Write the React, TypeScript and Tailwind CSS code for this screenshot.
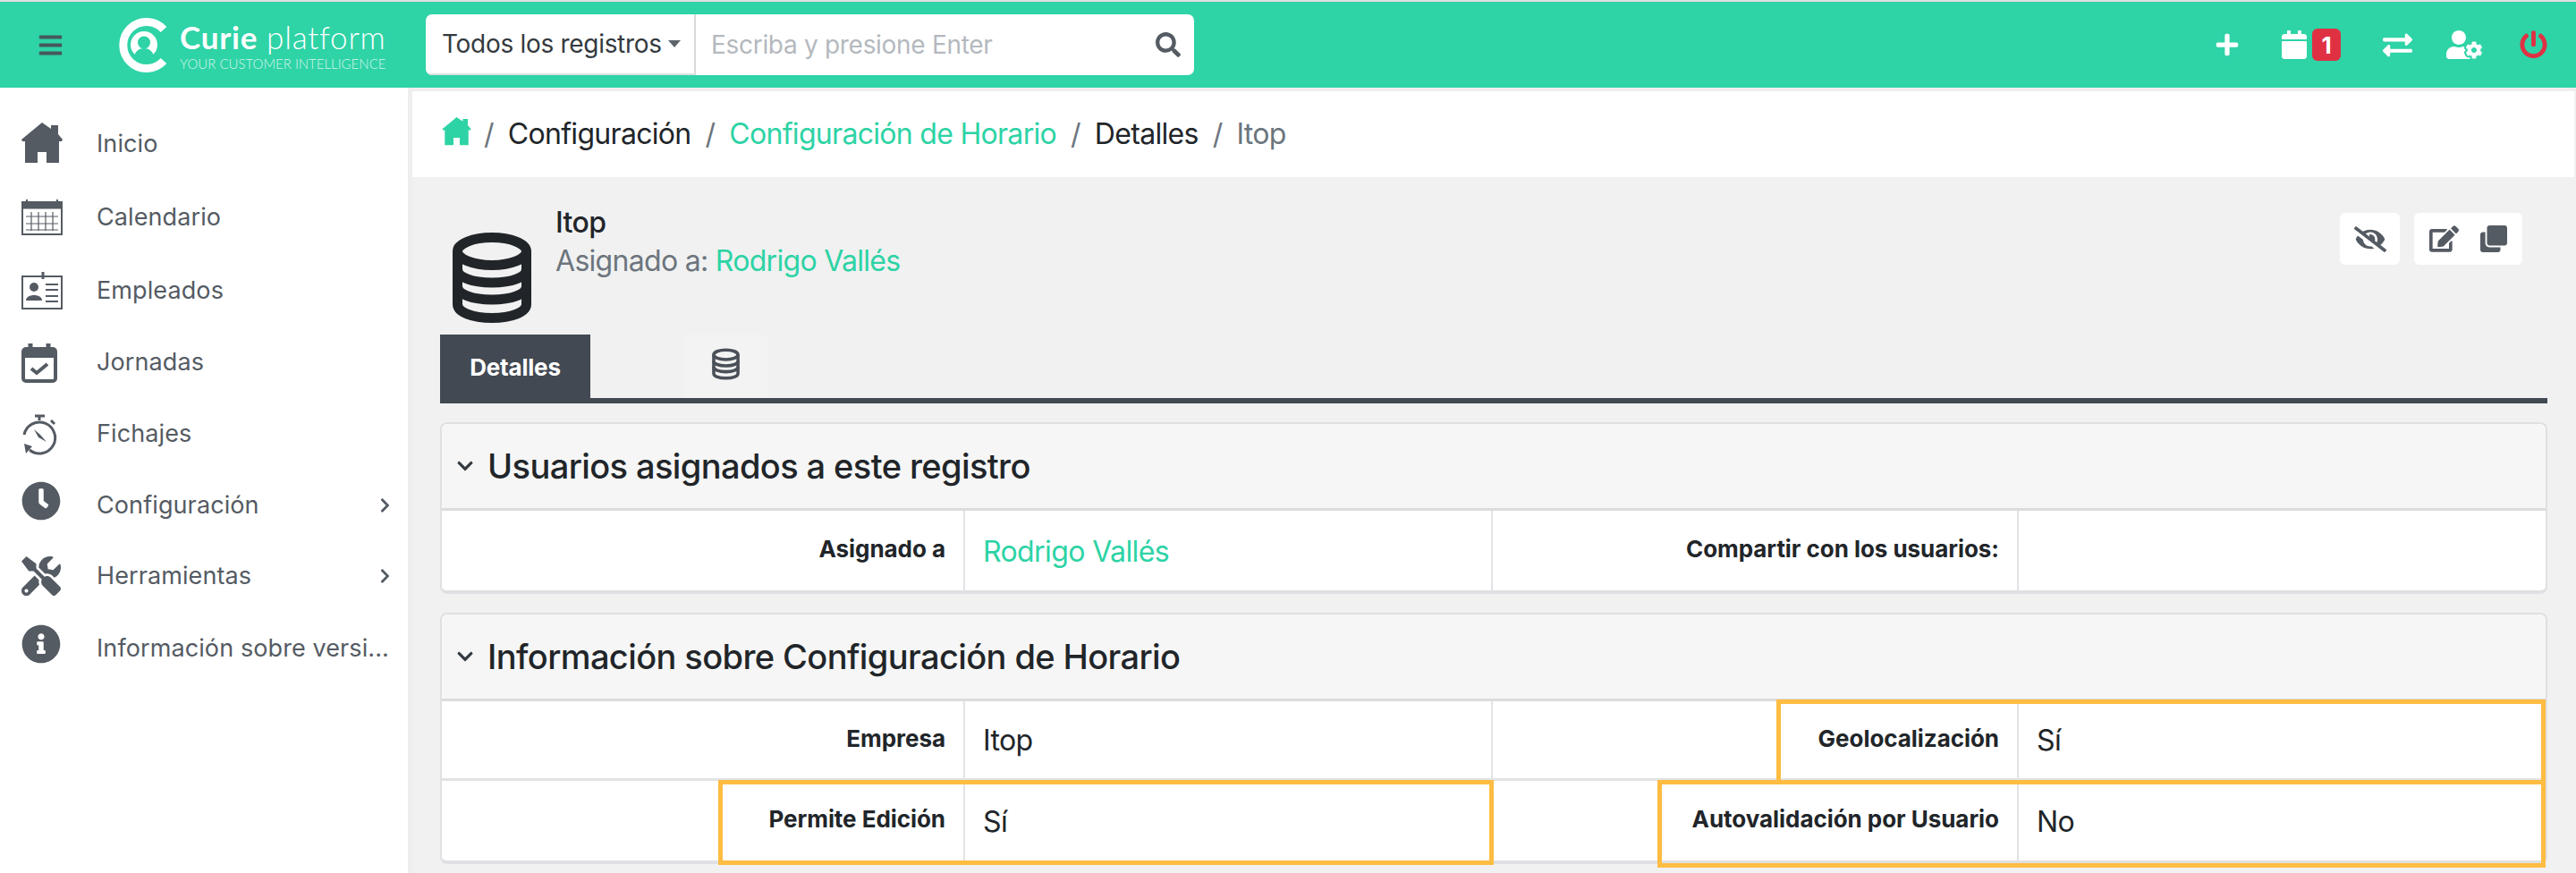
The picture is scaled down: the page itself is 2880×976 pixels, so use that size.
import React from "react";
import { FaBars, FaSearch, FaPlus, FaCalendar, FaExchangeAlt, FaUserCog, FaPowerOff, FaEyeSlash, FaEdit, FaClone, FaChevronRight, FaChevronDown, FaClock, FaTools, FaInfoCircle } from "react-icons/fa";

function Logo() {
  return (
    <svg viewBox="0 0 56 61" className="w-[56px] h-[61px] shrink-0" fill="none">
      <path d="M52 13 A26 26 0 1 0 52 48" stroke="#fff" strokeWidth="9" />
      <circle cx="30" cy="30" r="15" fill="#fff" />
      <circle cx="30" cy="27.5" r="7" fill="#2ed3a6" />
      <path d="M18 46 C20 37 24 34 30 34 C36 34 40 37 42 46 Z" fill="#2ed3a6" />
    </svg>
  );
}

function Db({ className, sw = 11 }: { className: string; sw?: number }) {
  return (
    <svg viewBox="0 0 88 101" className={className} fill="none" stroke="currentColor" strokeWidth={sw}>
      <ellipse cx="44" cy="21" rx="38.5" ry="15.5" />
      <path d="M5.5 21 V80 C5.5 89 22 95.5 44 95.5 C66 95.5 82.5 89 82.5 80 V21" />
      <path d="M5.5 41 C5.5 50 22 56 44 56 C66 56 82.5 50 82.5 41" />
      <path d="M5.5 60 C5.5 69 22 75 44 75 C66 75 82.5 69 82.5 60" />
    </svg>
  );
}

function House({ className }: { className: string }) {
  return (
    <svg viewBox="0 0 46 46" className={className} fill="currentColor">
      <path d="M23 0 L33 7 V3 H41 V13 L46 19 L45 21 H42 V45 H28 V33 H18 V45 H4 V21 H1 L0 19 Z" />
    </svg>
  );
}

function CalGrid() {
  return (
    <svg viewBox="0 0 46 40" className="w-[46px] h-[40px]" fill="none" stroke="#555b63">
      <rect x="1" y="3" width="44" height="36" strokeWidth="2" />
      <rect x="1" y="3" width="44" height="7" fill="#555b63" />
      <path d="M6 0 V4 M40 0 V4" strokeWidth="2" />
      <path d="M5 19 H41 M5 27 H41 M5 34 H41 M11 14 V35 M19 14 V35 M27 14 V35 M35 14 V35" strokeWidth="1.2" />
    </svg>
  );
}

function IdCard() {
  return (
    <svg viewBox="0 0 46 42" className="w-[46px] h-[42px]" fill="none" stroke="#555b63">
      <rect x="1" y="5" width="44" height="36" strokeWidth="2" />
      <path d="M24 0 V8" strokeWidth="3" />
      <circle cx="14" cy="17" r="5" fill="#555b63" stroke="none" />
      <path d="M5 32 C5 24 23 24 23 32 Z" fill="#555b63" stroke="none" />
      <path d="M27 14 H41 M27 20 H41 M27 27 H41 M27 33 H41" strokeWidth="2" />
    </svg>
  );
}

function CalCheck() {
  return (
    <svg viewBox="0 0 40 44" className="w-[40px] h-[44px]" fill="none" stroke="#555b63">
      <path d="M10 0 V8 M30 0 V8" strokeWidth="5" />
      <rect x="2" y="6" width="36" height="36" rx="3" strokeWidth="4" />
      <path d="M2 12 H38" strokeWidth="8" />
      <path d="M11 28 L17 33 L29 23" strokeWidth="4" />
    </svg>
  );
}

function Watch() {
  return (
    <svg viewBox="0 0 41 46" className="w-[41px] h-[46px]" fill="none" stroke="#555b63">
      <path d="M15 2 H26 M20 2 V7" strokeWidth="3" />
      <path d="M33 7 L37 11" strokeWidth="3" />
      <path d="M3 21 A17.5 17.5 0 1 1 9 38" strokeWidth="3" transform="translate(0 2)" />
      <path d="M3 33 L12 36 L5 44 Z" fill="#555b63" stroke="none" />
      <path d="M14 17 L21 23 L28 31 L19 26 Z" fill="#555b63" stroke="none" />
    </svg>
  );
}

const menu = [
  { t: "Inicio", h: "h-[82px]", i: <House className="w-[46px] h-[46px]" />, chev: false, n: "-mt-[2px]" },
  { t: "Calendario", h: "h-[82px]", i: <CalGrid />, chev: false, n: "" },
  { t: "Empleados", h: "h-[82px]", i: <IdCard />, chev: false, n: "" },
  { t: "Jornadas", h: "h-[79px]", i: <CalCheck />, chev: false, n: "" },
  { t: "Fichajes", h: "h-[81px]", i: <Watch />, chev: false, n: "" },
  { t: "Configuración", h: "h-[78px]", i: <FaClock className="w-[44px] h-[44px]" />, chev: true, n: "-mt-[10px]" },
  { t: "Herramientas", h: "h-[80px]", i: <FaTools className="w-[44px] h-[44px]" />, chev: true, n: "" },
  { t: "Información sobre versi...", h: "h-[82px]", i: <FaInfoCircle className="w-[44px] h-[44px]" />, chev: false, n: "-mt-[10px]" },
];

function Cell({ label, value, teal }: { label?: string; value?: boolean; teal?: boolean }) {
  if (value) {
    return (
      <div className={`flex items-center pl-[20px] pt-[2px] text-[32px] tracking-[-0.6px] border-r-2 border-[#e2e3e5] last:border-r-0 ${teal ? "text-[#2dd3a5]" : "text-[#212529]"}`}>
        {label}
      </div>
    );
  }
  return (
    <div className="flex items-center justify-end pr-[20px] pb-[4px] text-[26px] font-bold tracking-[-0.05px] text-[#212529] border-r-2 border-[#e2e3e5]">
      {label}
    </div>
  );
}

function Card({ title, rows, children, className }: { title: string; rows: { l1: string; v1: string; l2: string; v2: string; teal?: boolean }[]; children?: React.ReactNode; className?: string }) {
  return (
    <section className={`relative bg-white border-2 border-[#e0e0e0] border-b-[4px] border-b-[#dfe0e3] rounded-[8px] ${className ?? ""}`}>
      <div className="h-[97px] bg-[#f6f6f6] rounded-t-[8px] border-b-[3px] border-[#dcdcdc] flex items-center pl-[16px] gap-[15px]">
        <FaChevronDown className="w-[20px] h-[20px] text-[#343a40]" />
        <h2 className="text-[38px] font-medium tracking-[-0.6px] text-[#212529] leading-none">{title}</h2>
      </div>
      {rows.map((r, i) => (
        <div key={i} className={`grid grid-cols-[585px_590px_588px_1fr] h-[89px] ${i < rows.length - 1 ? "border-b-[3px] border-[#e2e3e5]" : ""}`}>
          <Cell label={r.l1} />
          <Cell label={r.v1} value teal={r.teal} />
          <Cell label={r.l2} />
          <Cell label={r.v2} value />
        </div>
      ))}
      {children}
    </section>
  );
}

export default function App() {
  return (
    <div className="w-[2880px] h-[976px] overflow-hidden bg-[#eeeeee] flex flex-col font-['Inter','Liberation_Sans',sans-serif]">
      <div className="h-[2px] shrink-0 bg-[#e0e0e0]" />
      <header className="h-[96px] shrink-0 bg-[#2ed3a6] flex items-center pl-[42px] pr-[32px]">
        <FaBars className="w-[29px] h-[29px] text-[#46585a] shrink-0" />
        <div className="ml-[60px] flex items-center w-[345px] shrink-0">
          <Logo />
          <div className="ml-[14px] text-white font-['Lato',sans-serif] leading-none">
            <div className="text-[35px] tracking-[0.8px] whitespace-nowrap leading-[38px]"><span className="font-bold">Curie</span> <span className="font-light">platform</span></div>
            <div className="text-[15px] font-light text-[#d3f5ea] whitespace-nowrap mt-[4px]">YOUR CUSTOMER INTELLIGENCE</div>
          </div>
        </div>
        <div className="flex w-[859px] h-[68px] bg-white rounded-[7px] overflow-hidden shrink-0">
          <div className="w-[302px] flex items-center pl-[18px] border-r-2 border-r-[#d9dadc] border-b-2 border-b-[#dfe1e4] text-[28px] tracking-[-0.3px] text-[#343a40] whitespace-nowrap gap-[7px] shrink-0">
            Todos los registros
            <span className="w-0 h-0 border-x-[7px] border-x-transparent border-t-[8px] border-t-[#5d646b]" />
          </div>
          <div className="flex-1 flex items-center pl-[17px] pr-[15px] text-[28px] tracking-[-0.3px] text-[#b4b9be]">
            <span className="flex-1">Escriba y presione Enter</span>
            <FaSearch className="w-[28px] h-[28px] text-[#555b63]" />
          </div>
        </div>
        <div className="ml-auto flex items-center text-white">
          <FaPlus className="w-[28px] h-[28px]" />
          <FaCalendar className="ml-[47px] w-[28px] h-[32px]" />
          <span className="ml-[6px] w-[32px] h-[36px] rounded-[6px] bg-[#e03143] flex items-center justify-center text-[26px] font-bold">1</span>
          <FaExchangeAlt className="ml-[47px] w-[33px] h-[33px]" />
          <FaUserCog className="ml-[38px] w-[40px] h-[32px]" />
          <FaPowerOff className="ml-[42px] w-[31px] h-[32px] text-[#e03143]" />
        </div>
      </header>
      <div className="flex flex-1 min-h-0">
        <aside className="w-[456px] shrink-0 bg-white pt-[22px] text-[#555b63]">
          {menu.map((m) => (
            <div key={m.t} className={`${m.h} flex items-center text-[27px] tracking-[0.1px]`}>
              <div className={`w-[108px] pl-[24px] shrink-0 flex ${m.n}`}>{m.i}</div>
              <span className="w-[340px] whitespace-nowrap">{m.t}</span>
              {m.chev && <FaChevronRight className="-ml-[24px] w-[13px] h-[18px] shrink-0" />}
            </div>
          ))}
        </aside>
        <main className="ml-[5px] flex-1 min-w-0 bg-[#f1f1f1] mt-[4px] pr-[2px]">
          <nav className="h-[96px] bg-white pl-[33px] flex items-center text-[32px] tracking-[-0.7px] text-[#6c757d] whitespace-nowrap">
            <House className="w-[33px] h-[32px] text-[#2dd3a5] -mt-[6px]" />
            <span className="ml-[14px] mr-[16px]">/</span>
            <span className="text-[#212529]">Configuración</span>
            <span className="mx-[16px]">/</span>
            <span className="text-[#2dd3a5]">Configuración de Horario</span>
            <span className="mx-[16px]">/</span>
            <span className="text-[#212529]">Detalles</span>
            <span className="mx-[16px]">/</span>
            <span>Itop</span>
          </nav>
          <div className="pl-[31px] pr-[30px]">
            <div className="h-[176px] flex relative">
              <Db className="ml-[14px] mt-[62px] w-[88px] h-[101px] text-[#212529] shrink-0" />
              <div className="ml-[27px] pt-[31px]">
                <div className="text-[32px] font-medium tracking-[-0.6px] text-[#212529] leading-[40px]">Itop</div>
                <div className="text-[32px] tracking-[-0.7px] text-[#6c757d] leading-[44px] mt-[1px]">Asignado a: <span className="text-[#2dd3a5]">Rodrigo Vallés</span></div>
              </div>
              <div className="ml-auto mt-[40px] mr-[28px] flex gap-[16px] h-[58px] text-[#555b63]">
                <div className="w-[67px] bg-white rounded-[6px] flex items-center justify-center"><FaEyeSlash className="w-[36px] h-[29px]" /></div>
                <div className="w-[121px] bg-white rounded-[6px] flex items-center justify-center gap-[24px]">
                  <FaEdit className="w-[33px] h-[30px]" />
                  <FaClone className="w-[30px] h-[30px]" />
                </div>
              </div>
            </div>
            <div className="h-[77px] border-b-[6px] border-[#424953] flex">
              <div className="w-[168px] bg-[#424953] text-white text-[26px] font-bold tracking-[-0.2px] flex items-center justify-center pb-[4px] -mb-[6px]">Detalles</div>
              <div className="ml-[105px] w-[93px] bg-[#f3f3f3] rounded-t-[6px] flex items-start justify-center pt-[15px]"><Db className="w-[31px] h-[36px] text-[#4a5058]" sw={10} /></div>
            </div>
            <Card
              className="mt-[21px]"
              title="Usuarios asignados a este registro"
              rows={[{ l1: "Asignado a", v1: "Rodrigo Vallés", l2: "Compartir con los usuarios:", v2: "", teal: true }]}
            />
            <Card
              className="mt-[21px]"
              title="Información sobre Configuración de Horario"
              rows={[
                { l1: "Empresa", v1: "Itop", l2: "Geolocalización", v2: "Sí" },
                { l1: "Permite Edición", v1: "Sí", l2: "Autovalidación por Usuario", v2: "No" },
              ]}
            >
              <div className="absolute left-[309px] top-[185px] w-[867px] h-[95px] border-[5px] border-[#ffbc42]" />
              <div className="absolute left-[1492px] top-[95px] w-[860px] h-[95px] border-[5px] border-[#ffbc42]" />
              <div className="absolute left-[1359px] top-[185px] w-[993px] h-[98px] border-[5px] border-[#ffbc42]" />
            </Card>
          </div>
        </main>
      </div>
    </div>
  );
}
